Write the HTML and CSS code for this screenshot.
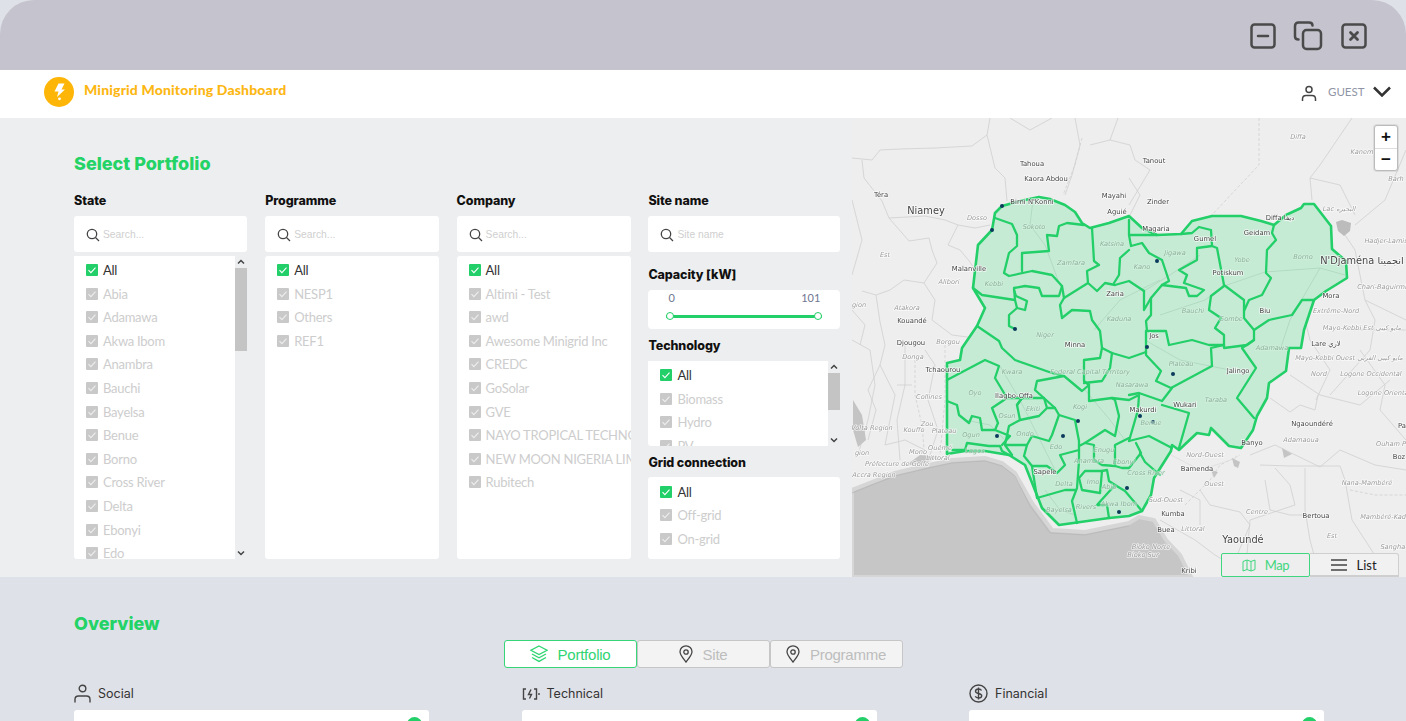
FILE: index.html
```html
<!DOCTYPE html>
<html lang="en">
<head>
<meta charset="utf-8">
<title>Minigrid Monitoring Dashboard</title>
<link rel="stylesheet" href="styles.css">
</head>
<body>
<div class="window">
  <div class="titlebar">
    <svg class="win-icon" width="26" height="26" viewBox="0 0 26 26"><rect x="1.5" y="1.5" width="23" height="23" rx="3"/><path d="M8 13h10"/></svg>
    <svg class="win-icon win-copy" width="30" height="30" viewBox="0 0 30 30"><rect x="10" y="9" width="18" height="19" rx="3.5"/><path d="M5.5 18.5C3 18.500 2 17 2 15.500V5C2 3 3.500 1.500 5.500 1.500H16C18 1.500 19.500 2.500 19.500 4.500"/></svg>
    <svg class="win-icon" width="26" height="26" viewBox="0 0 26 26"><rect x="1.500" y="1.500" width="23" height="23" rx="3"/><path class="win-x" d="M9.500 9.500l7 7M16.500 9.500l-7 7"/></svg>
  </div>
  <header class="header">
    <div class="brand">
      <svg width="30" height="30" viewBox="0 0 30 30"><circle class="logo-disc" cx="15" cy="15" r="15"/><path class="logo-bolt" d="M14.500 6.500H20.500L17.500 12.500H21L13 20 14.500 14.500H10.500z"/><circle class="logo-bolt" cx="15.500" cy="21.800" r="1.400"/></svg>
      <span class="brand-name">Minigrid Monitoring Dashboard</span>
    </div>
    <div class="user">
      <svg class="user-icon" width="16" height="17" viewBox="0 0 16 17"><circle cx="8" cy="4.500" r="3"/><path d="M1.500 16v-2c0-2 1.500-3.500 3.500-3.500h6c2 0 3.500 1.500 3.500 3.500v2"/></svg>
      <span class="guest">GUEST</span>
      <svg class="chev" width="18" height="11" viewBox="0 0 18 11"><path d="M1 1.500l8 8 8-8"/></svg>
    </div>
  </header>

  <section class="portfolio">
    <div class="filters">
      <h2 class="section-title">Select Portfolio</h2>
      <div class="filter-grid">
        <div class="col">
          <div class="label">State</div>
          <div class="search"><svg class="mag" width="14" height="14" viewBox="0 0 14 14"><circle cx="6" cy="6" r="4.700"/><path d="M9.500 9.500l3.500 3.500"/></svg><span>Search...</span></div>
          <div class="list tall">
            <div class="rows">
              <div class="row on"><i class="cb"><svg viewBox="0 0 12 12"><path d="M2.500 6.200l2.400 2.400 4.600-5"/></svg></i>All</div>
              <div class="row"><i class="cb"><svg viewBox="0 0 12 12"><path d="M2.500 6.200l2.400 2.400 4.600-5"/></svg></i>Abia</div>
              <div class="row"><i class="cb"><svg viewBox="0 0 12 12"><path d="M2.500 6.200l2.400 2.400 4.600-5"/></svg></i>Adamawa</div>
              <div class="row"><i class="cb"><svg viewBox="0 0 12 12"><path d="M2.500 6.200l2.400 2.400 4.600-5"/></svg></i>Akwa Ibom</div>
              <div class="row"><i class="cb"><svg viewBox="0 0 12 12"><path d="M2.500 6.200l2.400 2.400 4.600-5"/></svg></i>Anambra</div>
              <div class="row"><i class="cb"><svg viewBox="0 0 12 12"><path d="M2.500 6.200l2.400 2.400 4.600-5"/></svg></i>Bauchi</div>
              <div class="row"><i class="cb"><svg viewBox="0 0 12 12"><path d="M2.500 6.200l2.400 2.400 4.600-5"/></svg></i>Bayelsa</div>
              <div class="row"><i class="cb"><svg viewBox="0 0 12 12"><path d="M2.500 6.200l2.400 2.400 4.600-5"/></svg></i>Benue</div>
              <div class="row"><i class="cb"><svg viewBox="0 0 12 12"><path d="M2.500 6.200l2.400 2.400 4.600-5"/></svg></i>Borno</div>
              <div class="row"><i class="cb"><svg viewBox="0 0 12 12"><path d="M2.500 6.200l2.400 2.400 4.600-5"/></svg></i>Cross River</div>
              <div class="row"><i class="cb"><svg viewBox="0 0 12 12"><path d="M2.500 6.200l2.400 2.400 4.600-5"/></svg></i>Delta</div>
              <div class="row"><i class="cb"><svg viewBox="0 0 12 12"><path d="M2.500 6.200l2.400 2.400 4.600-5"/></svg></i>Ebonyi</div>
              <div class="row"><i class="cb"><svg viewBox="0 0 12 12"><path d="M2.500 6.200l2.400 2.400 4.600-5"/></svg></i>Edo</div>
            </div>
            <div class="scrollbar">
              <svg class="arrow" viewBox="0 0 12 12"><path d="M3 7.500l3-3 3 3"/></svg>
              <div class="thumb thumb-state"></div>
              <svg class="arrow arrow-end" viewBox="0 0 12 12"><path d="M3 4.500l3 3 3-3"/></svg>
            </div>
          </div>
        </div>

        <div class="col">
          <div class="label">Programme</div>
          <div class="search"><svg class="mag" width="14" height="14" viewBox="0 0 14 14"><circle cx="6" cy="6" r="4.700"/><path d="M9.500 9.500l3.500 3.500"/></svg><span>Search...</span></div>
          <div class="list tall solid">
            <div class="rows">
              <div class="row on"><i class="cb"><svg viewBox="0 0 12 12"><path d="M2.500 6.200l2.400 2.400 4.600-5"/></svg></i>All</div>
              <div class="row"><i class="cb"><svg viewBox="0 0 12 12"><path d="M2.500 6.200l2.400 2.400 4.600-5"/></svg></i>NESP1</div>
              <div class="row"><i class="cb"><svg viewBox="0 0 12 12"><path d="M2.500 6.200l2.400 2.400 4.600-5"/></svg></i>Others</div>
              <div class="row"><i class="cb"><svg viewBox="0 0 12 12"><path d="M2.500 6.200l2.400 2.400 4.600-5"/></svg></i>REF1</div>
            </div>
          </div>
        </div>

        <div class="col">
          <div class="label">Company</div>
          <div class="search"><svg class="mag" width="14" height="14" viewBox="0 0 14 14"><circle cx="6" cy="6" r="4.700"/><path d="M9.500 9.500l3.500 3.500"/></svg><span>Search...</span></div>
          <div class="list tall solid">
            <div class="rows">
              <div class="row on"><i class="cb"><svg viewBox="0 0 12 12"><path d="M2.500 6.200l2.400 2.400 4.600-5"/></svg></i>All</div>
              <div class="row"><i class="cb"><svg viewBox="0 0 12 12"><path d="M2.500 6.200l2.400 2.400 4.600-5"/></svg></i>Altimi - Test</div>
              <div class="row"><i class="cb"><svg viewBox="0 0 12 12"><path d="M2.500 6.200l2.400 2.400 4.600-5"/></svg></i>awd</div>
              <div class="row"><i class="cb"><svg viewBox="0 0 12 12"><path d="M2.500 6.200l2.400 2.400 4.600-5"/></svg></i>Awesome Minigrid Inc</div>
              <div class="row"><i class="cb"><svg viewBox="0 0 12 12"><path d="M2.500 6.200l2.400 2.400 4.600-5"/></svg></i>CREDC</div>
              <div class="row"><i class="cb"><svg viewBox="0 0 12 12"><path d="M2.500 6.200l2.400 2.400 4.600-5"/></svg></i>GoSolar</div>
              <div class="row"><i class="cb"><svg viewBox="0 0 12 12"><path d="M2.500 6.200l2.400 2.400 4.600-5"/></svg></i>GVE</div>
              <div class="row"><i class="cb"><svg viewBox="0 0 12 12"><path d="M2.500 6.200l2.400 2.400 4.600-5"/></svg></i>NAYO TROPICAL TECHNOLOGY</div>
              <div class="row"><i class="cb"><svg viewBox="0 0 12 12"><path d="M2.500 6.200l2.400 2.400 4.600-5"/></svg></i>NEW MOON NIGERIA LIMITED</div>
              <div class="row"><i class="cb"><svg viewBox="0 0 12 12"><path d="M2.500 6.200l2.400 2.400 4.600-5"/></svg></i>Rubitech</div>
            </div>
          </div>
        </div>

        <div class="col">
          <div class="label">Site name</div>
          <div class="search"><svg class="mag" width="14" height="14" viewBox="0 0 14 14"><circle cx="6" cy="6" r="4.700"/><path d="M9.500 9.500l3.500 3.500"/></svg><span>Site name</span></div>
          <div class="label label-capacity">Capacity [kW]</div>
          <div class="slider">
            <div class="slider-values"><span>0</span><span>101</span></div>
            <div class="track"><i></i><i></i></div>
          </div>
          <div class="label label-tech">Technology</div>
          <div class="list tech">
            <div class="rows">
              <div class="row on"><i class="cb"><svg viewBox="0 0 12 12"><path d="M2.500 6.200l2.400 2.400 4.600-5"/></svg></i>All</div>
              <div class="row"><i class="cb"><svg viewBox="0 0 12 12"><path d="M2.500 6.200l2.400 2.400 4.600-5"/></svg></i>Biomass</div>
              <div class="row"><i class="cb"><svg viewBox="0 0 12 12"><path d="M2.500 6.200l2.400 2.400 4.600-5"/></svg></i>Hydro</div>
              <div class="row"><i class="cb"><svg viewBox="0 0 12 12"><path d="M2.500 6.200l2.400 2.400 4.600-5"/></svg></i>PV</div>
            </div>
            <div class="scrollbar">
              <svg class="arrow" viewBox="0 0 12 12"><path d="M3 7.500l3-3 3 3"/></svg>
              <div class="thumb thumb-tech"></div>
              <svg class="arrow arrow-end" viewBox="0 0 12 12"><path d="M3 4.500l3 3 3-3"/></svg>
            </div>
          </div>
          <div class="label label-grid">Grid connection</div>
          <div class="list grid-list solid">
            <div class="rows">
              <div class="row on"><i class="cb"><svg viewBox="0 0 12 12"><path d="M2.500 6.200l2.400 2.400 4.600-5"/></svg></i>All</div>
              <div class="row"><i class="cb"><svg viewBox="0 0 12 12"><path d="M2.500 6.200l2.400 2.400 4.600-5"/></svg></i>Off-grid</div>
              <div class="row"><i class="cb"><svg viewBox="0 0 12 12"><path d="M2.500 6.200l2.400 2.400 4.600-5"/></svg></i>On-grid</div>
            </div>
          </div>
        </div>
      </div>
    </div>

    <div class="map">
      <svg class="map-svg" width="554" height="459" viewBox="852 118 554 459">
        <path class="ocean" d="M852 490L872 482 895 473 929 465 952 460 985 458 1002 463 1015 473 1032 503 1052 530 1085 532 1129 523 1139 517 1154 520 1166 540 1180 555 1191 577H852z"/>
        <path class="coast" d="M852 493L872 485 895 476 929 468 952 463 985 461 1002 466 1015 476 1030 506 1050 533 1085 535 1129 526"/>
        <g class="lines">
          <path d="M852 158L872 160 880 150 900 149 935 148 972 146 987 135 990 118"/>
          <path d="M987 135L995 168 1005 178 1007 201"/>
          <path d="M862 160L864 178 882 201 889 218 909 241 929 238 932 250 937 263 924 283 904 280 890 290 876 295 862 291"/>
          <path d="M889 218L925 216 945 220 958 225 975 228 990 225"/>
          <path d="M958 225L948 245 960 250 970 262 975 270"/>
          <path d="M924 283L935 300 932 320 952 335 975 338"/>
          <path d="M876 295L880 322 885 345 880 365 895 395 885 445"/>
          <path d="M905 345L905 385 897 420 900 460M897 385H912M880 365L868 390 876 410 868 440"/>
          <path class="dash" d="M915 355L915 395 922 425 925 460M945 345L945 400 940 455"/>
          <path d="M852 340L870 350 875 385 868 420 858 455M925 350L935 365 928 400 938 430 930 455"/>
          <path d="M852 200L862 240 852 275M852 310L865 325 860 345M885 445L905 440 925 450"/>
          <path d="M1075 118L1080 145 1072 175 1065 195M1010 118L1030 130 1052 118"/>
          <path class="dash" d="M1082 138L1075 165 1063 195M1259 118V165L1240 185 1212 215"/>
          <path d="M1110 140L1130 145 1135 160 1150 170 1129 205M1129 178L1140 195 1130 215M1090 145L1110 140 1118 118"/>
          <path d="M1352 118L1320 165 1310 178 1312 200M1310 178L1340 185 1355 215M1406 150L1385 200 1355 225"/>
          <path d="M1345 235L1355 250 1365 300 1375 320 1370 350 1330 395"/>
          <path d="M1300 300L1310 340 1330 370 1316 400M1360 350L1385 385 1380 410 1406 440M1345 330H1406M1365 300L1406 320"/>
          <path d="M1270 398L1290 412 1300 405 1315 410 1318 395M1250 455L1275 445 1320 467 1340 450 1375 465 1406 470M1290 375L1320 395 1360 405 1390 380"/>
          <path d="M1260 465L1290 466 1340 466 1345 480 1352 520 1378 560 1395 577"/>
          <path d="M1305 468L1305 510 1310 540 1320 577M1275 468L1290 485 1295 505 1250 520 1245 577M1265 480L1270 510 1290 515 1320 515"/>
          <path d="M1200 490L1210 505 1240 512 1250 525 1235 560M1160 520L1195 540 1215 555 1240 570M1180 490L1200 500 1200 525"/>
          <path class="dash" d="M1350 490L1375 495 1406 495M1185 505L1210 480 1220 465 1240 455"/>
          <path class="shade" d="M1171 455L1200 470 1225 462 1236 458"/>
        </g>
        <path class="lake" d="M1336 222L1342 220 1351 223 1350 231 1344 236 1338 231z"/>
        <path class="hills" d="M853 400L862 415 866 440 858 447 853 430zM920 455L940 457 925 463 905 466zM1232 458L1240 462 1238 468 1234 466zM1282 448L1292 454 1284 458zM1211 470L1218 472 1214 478z"/>

        <path class="ng" d="M1002 206L1020 201 1039 197 1050 199 1065 205 1075 212 1082 223 1090 228 1109 223 1129 216 1142 228 1157 235 1181 234 1192 221 1212 216 1241 216 1261 221 1274 225 1286 215 1301 208 1304 204 1314 204 1331 226 1332 249 1346 261 1347 278 1326 291 1314 300 1304 330 1301 348 1289 348 1286 371 1269 383 1267 398 1257 416 1253 430 1241 448 1229 446 1211 428 1209 435 1197 433 1179 450 1172 445 1171 451 1154 478 1151 495 1142 511 1129 516 1109 518 1059 525 1042 508 1025 465 1009 455 985 451 965 451 947 454 947 401 947 363 960 360 962 348 977 326 985 308 973 288 978 245 992 230 995 213z"/>
        <g class="ng-faint">
          <path d="M1033 200L1030 225 1045 245 1058 280M1144 291L1170 275 1200 255M1224 286L1265 272 1320 268 1345 275M1320 268L1290 320 1280 350M1160 315L1205 300 1224 286M1094 330L1120 300 1160 280M1000 366L1020 400 1040 440 1055 470M1145 340L1180 360 1230 370M1085 390L1110 420 1125 440M965 420L990 425 1005 440M1045 490L1060 510 1075 515"/>
        </g>
        <g class="borders">
          <path d="M995 218L1012 224 1017 235 1017 246 1009 253 1004 273 1009 276 1032 271 1052 275 1062 286 1064 298 1060 305 1062 318 1072 310 1090 311 1092 320 1100 331 1102 348 1100 358 1084 360 1084 381 1089 385 1082 391 1064 376 1052 373 1015 360 1002 348 999 341 977 326"/>
          <path d="M973 288L982 295 1015 300 1017 308 1009 315 1009 326 1015 329"/>
          <path d="M1015 300L1014 288 1025 286 1039 288 1042 296 1059 296 1062 286"/>
          <path d="M1014 290L1016 296 1027 301 1025 310 1017 308"/>
          <path d="M1084 225L1067 223 1059 226 1057 236 1047 235 1049 251 1022 253 1022 271"/>
          <path d="M1092 228L1094 261 1099 265 1087 271 1088 283 1064 298M1088 283L1097 291 1105 283 1115 285 1129 281 1144 291"/>
          <path d="M1129 250L1120 258 1119 275 1114 283"/>
          <path d="M1129 220L1129 235 1157 235M1129 235L1131 246 1142 243 1149 253 1162 260 1169 281 1162 285 1151 298 1144 310 1144 291"/>
          <path d="M1162 285L1186 288 1189 296 1197 296 1204 290 1184 283 1187 275 1179 270 1197 260 1197 248 1212 246 1211 230 1199 227 1192 233 1181 234"/>
          <path d="M1212 246L1217 248 1224 285 1244 300 1244 311 1249 300 1262 295 1271 278 1266 273 1267 250 1276 240 1272 233 1274 225"/>
          <path d="M1224 286L1211 296 1209 310 1221 318 1215 328 1224 335 1224 348 1247 345 1254 340 1254 330 1244 318 1244 311"/>
          <path d="M1254 330L1269 320 1292 315 1302 300 1314 300"/>
          <path d="M1151 298L1151 315 1146 321 1147 331 1166 331 1169 345 1192 340 1209 345 1224 345"/>
          <path d="M1254 340L1242 348 1256 368 1237 398 1254 418"/>
          <path d="M1146 331L1146 355 1161 371 1156 381 1171 388 1212 366 1211 348 1224 345"/>
          <path d="M1102 348L1112 353 1129 358 1146 352"/>
          <path d="M1129 395L1139 393 1162 401 1172 388M1162 405L1189 413 1179 448"/>
          <path d="M1112 353L1110 368 1102 381 1084 383M1089 385L1089 401 1112 398 1129 400 1139 395 1138 410 1129 441"/>
          <path d="M1129 441L1149 436 1172 448M1136 443L1141 453 1129 468 1122 468 1115 466"/>
          <path d="M1140 453L1145 462 1160 475"/>
          <path d="M947 380L985 360 999 366 995 378 1007 398 1022 398 1017 405 1020 420 1009 426 1005 445 1012 455"/>
          <path d="M1064 376L1037 381 1035 390 1055 408 1059 415 1075 420 1079 441 1079 461 1077 488 1072 501 1077 523"/>
          <path d="M1112 398L1115 400 1119 416 1115 436 1105 430 1085 443 1079 446"/>
          <path d="M1085 443L1094 445 1094 460 1102 465 1115 466 1115 445 1129 438"/>
          <path d="M1079 478L1082 490 1100 493 1102 471 1085 471 1079 478"/>
          <path d="M1102 471L1107 470 1109 481 1115 485 1097 505 1107 505 1109 518"/>
          <path d="M1115 485L1125 491 1142 511"/>
          <path d="M1020 420L1039 416 1047 408 1055 408M1017 405L1022 398 1044 398 1047 408"/>
          <path d="M982 430L995 430 998 423 992 408 1007 398"/>
          <path d="M947 401L957 405 959 415 969 423 972 416 980 418 982 430"/>
          <path d="M952 450L965 450 967 443 989 446 1000 446 1002 451 1009 455"/>
          <path d="M995 430L1010 436 1002 445"/>
          <path d="M1059 415L1052 435 1049 441 1032 436 1027 445 1024 456 1032 466 1047 466 1057 473 1065 465 1060 455 1079 450"/>
          <path d="M1005 445L1027 445M1032 466L1037 498 1065 490 1075 490"/>
        </g>

        <g class="sites">
          <circle cx="1002" cy="206" r="2"/><circle cx="992" cy="230" r="2"/><circle cx="1015" cy="329" r="2"/><circle cx="1157" cy="261" r="2"/><circle cx="1147" cy="347" r="2"/><circle cx="1173" cy="374" r="2"/><circle cx="1140" cy="416" r="2"/><circle cx="1153" cy="422" r="2"/><circle cx="997" cy="436" r="2"/><circle cx="1063" cy="436" r="2"/><circle cx="1078" cy="421" r="2"/><circle cx="1127" cy="488" r="2"/><circle cx="1119" cy="512" r="2"/>
        </g>

        <g class="city">
          <text x="1032" y="166">Tahoua</text><text x="1046" y="181">Kaora Abdou</text><text x="1114" y="198">Mayahi</text><text x="1117" y="214">Aguié</text><text x="1032" y="204">Birni N'Konni</text><text x="881" y="197">Téra</text><text x="969" y="271">Malanville</text><text x="1115" y="296">Zaria</text><text x="912" y="323">Kouandé</text><text x="911" y="345">Djougou</text><text x="1075" y="347">Minna</text><text x="1154" y="163">Tanout</text><text x="1158" y="204">Zinder</text><text x="1156" y="231">Magaria</text><text x="1205" y="241">Gumel</text><text x="1257" y="235">Geidam</text><text x="1280" y="220">Diffa ديفا</text><text x="1228" y="275">Potiskum</text><text x="1331" y="298">Mora</text><text x="1265" y="313">Biu</text><text x="1154" y="338">Jos</text><text x="1326" y="346">Lare لاري</text><text x="1238" y="373">Jalingo</text><text x="1185" y="407">Wukari</text><text x="1143" y="412">Makurdi</text><text x="1312" y="426">Ngaoundéré</text><text x="1402" y="428">Pa</text><text x="1252" y="445">Banyo</text><text x="1399" y="459">Boz</text><text x="1197" y="471">Bamenda</text><text x="1173" y="516">Kumba</text><text x="1316" y="518">Bertoua</text><text x="1166" y="532">Buea</text><text x="1189" y="573">Kribi</text><text x="943" y="372">Tchaourou</text><text x="1014" y="398">Ilagbo-Offa</text><text x="1045" y="474">Sapele</text>
          <text class="big" x="926" y="214">Niamey</text><text class="big" x="1362" y="264">N'Djaména انجمينا</text><text class="big" x="1243" y="543">Yaoundé</text>
        </g>
        <g class="region">
          <text x="977" y="220">Dosso</text><text x="885" y="257">Est</text><text x="949" y="284">Alibori</text><text x="907" y="310">Atakora</text><text x="948" y="344">Borgou</text><text x="1298" y="139">Diffa</text><text x="1362" y="154">Kanem</text><text x="1339" y="211">Lac البحيرة</text><text x="1386" y="243">Hadjer-Lamis</text><text x="1382" y="289">Chari-Baguirmi</text><text x="1336" y="313">Extrême-Nord</text><text x="1362" y="330">Mayo-Kebbi Est مايو كيبي</text><text x="1396" y="181">Barh</text><text x="1349" y="360">Mayo-Kebbi Ouest مايو كيبي الغربي</text><text x="1319" y="376">Nord</text><text x="1371" y="376">Logone Occidental</text><text x="1384" y="395">Logone Oriental</text><text x="1301" y="442">Adamaoua</text><text x="1391" y="446">Ouham P</text><text x="1205" y="457">Nord-Ouest</text><text x="1214" y="486">Ouest</text><text x="1367" y="485">Nana-Mambéré</text><text x="1166" y="502">Sud-Ouest</text><text x="1257" y="514">Centre</text><text x="1386" y="519">Mambéré-Kadéï</text><text x="1193" y="531">Littoral</text><text x="1332" y="538">Est</text><text x="1151" y="549">Bioko Norte</text><text x="1143" y="557">Bioko Sur</text><text x="1394" y="549">Sangha-</text><text x="913" y="359">Donga</text><text x="929" y="399">Collines</text><text x="927" y="426">Zou</text><text x="944" y="433">Plateau</text><text x="914" y="432">Kouffo</text><text x="872" y="430">Volta Region</text><text x="918" y="454">Mono</text><text x="940" y="450">Ouémé</text><text x="938" y="460">Littoral</text><text x="897" y="466">Préfecture de Golfe</text><text x="874" y="477">Accra Region</text><text x="862" y="455">gion</text><text x="859" y="307">gion</text>
        </g>
        <g class="region inner">
          <text x="1034" y="229">Sokoto</text><text x="994" y="286">Kebbi</text><text x="1071" y="265">Zamfara</text><text x="1112" y="246">Katsina</text><text x="1045" y="337">Niger</text><text x="1119" y="321">Kaduna</text><text x="1303" y="259">Borno</text><text x="1242" y="262">Yobe</text><text x="1175" y="255">Jigawa</text><text x="1142" y="269">Kano</text><text x="1193" y="313">Bauchi</text><text x="1231" y="321">Gombe</text><text x="1272" y="350">Adamawa</text><text x="1181" y="366">Plateau</text><text x="1216" y="402">Taraba</text><text x="1151" y="425">Benue</text><text x="1146" y="475">Cross River</text><text x="1012" y="374">Kwara</text><text x="1090" y="374">Federal Capital Territory</text><text x="1132" y="387">Nasarawa</text><text x="975" y="395">Oyo</text><text x="1007" y="418">Osun</text><text x="1033" y="411">Ekiti</text><text x="1080" y="409">Kogi</text><text x="971" y="437">Ogun</text><text x="1025" y="436">Ondo</text><text x="1056" y="449">Edo</text><text x="1104" y="452">Enugu</text><text x="975" y="453">Lagos</text><text x="1089" y="463">Anambra</text><text x="1124" y="464">Ebonyi</text><text x="1064" y="486">Delta</text><text x="1093" y="484">Imo</text><text x="1109" y="489">Abia</text><text x="1059" y="512">Bayelsa</text><text x="1086" y="509">Rivers</text><text x="1119" y="506">Akwa Ibom</text>
        </g>
      </svg>
      <div class="zoom-ctl"><button class="zoom-btn">+</button><button class="zoom-btn">−</button></div>
      <div class="view-toggle">
        <div class="view-btn view-on">
          <svg class="map-ico" width="14" height="13" viewBox="0 0 14 13"><path d="M1 2.500l4-1.500 4 1.500 4-1.500v9.500l-4 1.500-4-1.500-4 1.500zM5 1v9.500M9 2.500V12"/></svg>
          Map
        </div>
        <div class="view-btn">
          <svg class="list-ico" width="16" height="12" viewBox="0 0 16 12"><path d="M0 1h16M0 6h16M0 11h16"/></svg>
          List
        </div>
      </div>
    </div>
  </section>

  <section class="overview">
    <h2 class="section-title overview-title">Overview</h2>
    <div class="tabs">
      <div class="tab tab-on"><svg class="tab-ico" width="18" height="18" viewBox="0 0 18 18"><path d="M9 1l8 4.300-8 4.300-8-4.300zM2 9l7 3.800L16 9M2 12.500l7 3.900 7-3.900"/></svg>Portfolio</div>
      <div class="tab"><svg class="tab-ico" width="14" height="18" viewBox="0 0 14 18"><path d="M7 17C3.500 12.500 1 10 1 6.800A6 6 0 0 1 13 6.800C13 10 10.500 12.500 7 17z"/><circle cx="7" cy="7" r="2.200"/></svg>Site</div>
      <div class="tab"><svg class="tab-ico" width="14" height="18" viewBox="0 0 14 18"><path d="M7 17C3.500 12.500 1 10 1 6.800A6 6 0 0 1 13 6.800C13 10 10.500 12.500 7 17z"/><circle cx="7" cy="7" r="2.200"/></svg>Programme</div>
    </div>
    <div class="kpis">
      <div class="kpi">
        <div class="kpi-head"><svg class="kpi-ico" width="17" height="19" viewBox="0 0 17 19"><circle cx="8.500" cy="4.500" r="3.300"/><path d="M1 18.500v-3c0-2 1.500-3.500 3.500-3.500h8c2 0 3.500 1.500 3.500 3.500v3"/></svg>Social</div>
        <div class="kpi-card"><i class="dot"></i></div>
      </div>
      <div class="kpi">
        <div class="kpi-head"><svg class="kpi-ico" width="18" height="12" viewBox="0 0 18 12"><path d="M4 1H1.500v10H4M12 1h2.500v10H12M9 1.500L6.500 6.500h3L7.500 10.500M17 5v2"/></svg>Technical</div>
        <div class="kpi-card"><i class="dot"></i></div>
      </div>
      <div class="kpi">
        <div class="kpi-head"><svg class="kpi-ico" width="19" height="19" viewBox="0 0 19 19"><circle cx="9.500" cy="9.500" r="8.500"/><path d="M12.500 6.500c-.5-1-1.500-1.500-3-1.500-2 0-3 1-3 2.200 0 3 6.200 1.600 6.200 4.600 0 1.200-1.200 2.200-3.200 2.200-1.500 0-2.700-.6-3.200-1.700M9.500 3.500v12"/></svg>Financial</div>
        <div class="kpi-card"><i class="dot"></i></div>
      </div>
    </div>
  </section>
</div>
</body>
</html>
```
FILE: styles.css
```css
* { box-sizing: border-box; }
html, body { margin: 0; padding: 0; background: #fff; }
body { font-family: "Lato", "Liberation Sans", sans-serif; }
.window { width: 1406px; height: 721px; overflow: hidden; background: #dfe1e8; }

.titlebar { height: 70px; background: #c5c4ce; border-radius: 34px 34px 0 0; display: flex; justify-content: flex-end; align-items: center; gap: 17px; padding: 2px 39px 0 0; }
.win-icon { fill: none; stroke: #4a4a4a; stroke-width: 2.500; stroke-linecap: round; }
.win-copy { margin: -1px 1px 0 0; }
.win-x { stroke-width: 2.800; }

.header { height: 48px; background: #fff; display: flex; justify-content: space-between; align-items: center; padding: 0 15px 5px 44px; }
.brand { display: flex; align-items: center; gap: 10px; }
.logo-disc { fill: #fdb507; }
.logo-bolt { fill: #fff; }
.brand-name { font-size: 14px; font-weight: 900; color: #fdb713; letter-spacing: 0.15px; margin-bottom: 4px; }
.user { display: flex; align-items: center; }
.user-icon { fill: none; stroke: #444; stroke-width: 1.500; margin: 3px 10px 0 0; }
.guest { font-size: 11.500px; color: #8f95a6; width: 46px; padding-left: 1px; }
.chev { fill: none; stroke: #333; stroke-width: 2.500; }

.portfolio { height: 459px; display: flex; background: #edeef0; }
.filters { width: 852px; flex: none; padding: 36px 0 0 74px; }
.section-title { margin: 0; font-family: "Inter", sans-serif; font-weight: 800; font-size: 18px; line-height: 20px; color: #23d366; }
.filter-grid { display: grid; grid-template-columns: 173.400px 173.600px 174px 192px; column-gap: 17.800px; margin-top: 16px; }
.col { display: flex; flex-direction: column; min-width: 0; }
.label { font-family: "Inter", sans-serif; font-weight: 800; font-size: 12.500px; height: 20px; line-height: 22px; color: #111; margin-bottom: 6px; letter-spacing: -0.1px; white-space: nowrap; }
.search { height: 36px; background: #fff; border-radius: 3px; display: flex; align-items: center; padding-left: 12px; font-family: "Liberation Sans", sans-serif; font-size: 10.300px; color: #cfcfcf; gap: 3px; }
.mag { fill: none; stroke: #444; stroke-width: 1.300; margin-top: 2px; }
.list { display: flex; overflow: hidden; background: linear-gradient(#fff, #fff) no-repeat; background-size: calc(100% - 12px) 100%; border-radius: 0 0 3px 3px; }
.list.solid { background: #fff; border-radius: 3px; }
.tall { height: 303px; margin-top: 4px; }
.rows { flex: 1; min-width: 0; overflow: hidden; padding: 2.200px 0 0 12px; }
.row { height: 23.600px; display: flex; align-items: center; gap: 5px; font-size: 13px; letter-spacing: -0.25px; color: #cdcdcd; white-space: nowrap; }
.row.on { color: #333; }
.cb { width: 12px; height: 12px; flex: none; background: #c9c9c9; border-radius: 1px; display: block; }
.on .cb { background: #22cf68; }
.cb svg { display: block; width: 12px; height: 12px; fill: none; stroke: #eee; stroke-width: 1.100; }
.on .cb svg { stroke: #fff; }
.scrollbar { width: 12px; flex: none; display: flex; flex-direction: column; }
.arrow { width: 12px; height: 12px; fill: none; stroke: #444; stroke-width: 1.500; flex: none; }
.arrow-end { margin-top: auto; }
.thumb { background: #c4c4c4; flex: none; }
.thumb-state { height: 83px; }
.thumb-tech { height: 37px; }

.label-capacity { margin-top: 12px; }
.slider { height: 39px; background: #fff; border-radius: 4px; padding-top: 1px; }
.slider-values { display: flex; justify-content: space-between; padding: 0 20px; font-size: 11px; line-height: 14px; color: #6f7690; }
.track { height: 3px; margin: 9.500px 18px 0; background: #22cf68; display: flex; justify-content: space-between; align-items: center; }
.track i { width: 8px; height: 8px; border-radius: 50%; background: #fff; border: 1px solid #22cf68; display: block; }
.label-tech { margin-top: 6px; }
.tech { height: 85px; }
.label-grid { margin-top: 6px; margin-bottom: 5px; }
.grid-list { height: 82px; }
.grid-list .rows { padding-top: 3px; }

.map { flex: 1; position: relative; overflow: hidden; background: #eee; }
.map-svg { display: block; filter: blur(0.25px); }
.ocean { fill: #c6c6c6; stroke: #d6d6d6; stroke-width: 4; }
.coast { fill: none; stroke: #b8b8b8; stroke-width: 0.800; }
.lines path { fill: none; stroke: #cfcfcf; stroke-width: 0.800; }
.lines .dash { stroke-dasharray: 3 2; }
.lines .shade { stroke: #ddd; }
.lake { fill: #bcbcbc; }
.hills { fill: #c4c4c4; }
.ng { fill: #c6ebd5; stroke: #22cf68; stroke-width: 2.600; stroke-linejoin: round; }
.ng-faint path { fill: none; stroke: #a9d2ba; stroke-width: 0.700; }
.borders path { fill: none; stroke: #22cf68; stroke-width: 2.300; stroke-linejoin: round; stroke-linecap: round; }
.sites circle { fill: #0b3a5c; }
.city text, .region text { text-anchor: middle; font-family: "DejaVu Sans", sans-serif; paint-order: stroke; stroke-linejoin: round; }
.city text { font-size: 6.800px; fill: #444; stroke: rgba(255,255,255,.75); stroke-width: 1.500px; }
.city .big { font-size: 9.800px; fill: #444; }
.region text { font-size: 6.600px; font-style: italic; fill: #9b9b9b; stroke: rgba(255,255,255,.7); stroke-width: 1.500px; }
.region.inner text { fill: #8bb29b; stroke: rgba(220,245,230,.5); }

.zoom-ctl { position: absolute; top: 7px; right: 8px; width: 24px; height: 46px; background: #fff; border: 1px solid #bbb; border-radius: 3px; display: flex; flex-direction: column; box-shadow: 0 0 0 1px rgba(0,0,0,.08); }
.zoom-btn { flex: 1; padding: 0; border: 0; background: none; font: 700 17px/1 "Liberation Sans", sans-serif; color: #111; }
.zoom-btn:first-child { border-bottom: 1px solid #ddd; }
.view-toggle { position: absolute; left: 369px; bottom: 0; display: flex; height: 24px; }
.view-btn { width: 89px; display: flex; align-items: center; justify-content: center; gap: 9px; background: #f1f1f1; border: 1px solid #cfcfcf; border-bottom-width: 2px; border-left: 0; border-radius: 0 3px 0 0; font-size: 13px; color: #222; }
.view-btn.view-on { background: #eee; border: 1px solid #3fd67f; color: #3fd67f; border-radius: 2px; letter-spacing: -0.3px; }
.map-ico { fill: none; stroke: #3fd67f; stroke-width: 1; }
.list-ico { fill: none; stroke: #444; stroke-width: 1.500; }

.overview { padding: 34px 0 0 74px; }
.overview-title { height: 24px; line-height: 26px; }
.tabs { display: flex; justify-content: center; margin: 5px 0 0 -74px; }
.tab { width: 133px; height: 28px; display: flex; align-items: center; justify-content: center; gap: 10px; background: #f3f3f3; border: 1px solid #c6c6c6; border-radius: 3px; font-family: "Liberation Sans", sans-serif; font-size: 15px; letter-spacing: -0.25px; color: #bdbdbd; }
.tab-ico { fill: none; stroke: #444; stroke-width: 1.300; }
.tab-on { background: #fff; border-color: #35d578; color: #2fd573; }
.tab-on .tab-ico { stroke: #2fd573; }
.kpis { display: grid; grid-template-columns: repeat(3, 355px); column-gap: 92.500px; margin-top: 14px; }
.kpi-head { height: 28px; padding-bottom: 5px; display: flex; align-items: center; gap: 7px; font-family: "Inter", sans-serif; font-size: 12.500px; color: #333; }
.kpi-ico { fill: none; stroke: #444; stroke-width: 1.400; }
.kpi-card { height: 120px; background: #fff; border-radius: 3px; position: relative; }
.dot { position: absolute; top: 7px; right: 7px; width: 15px; height: 15px; border-radius: 50%; background: #22cf68; }
```
